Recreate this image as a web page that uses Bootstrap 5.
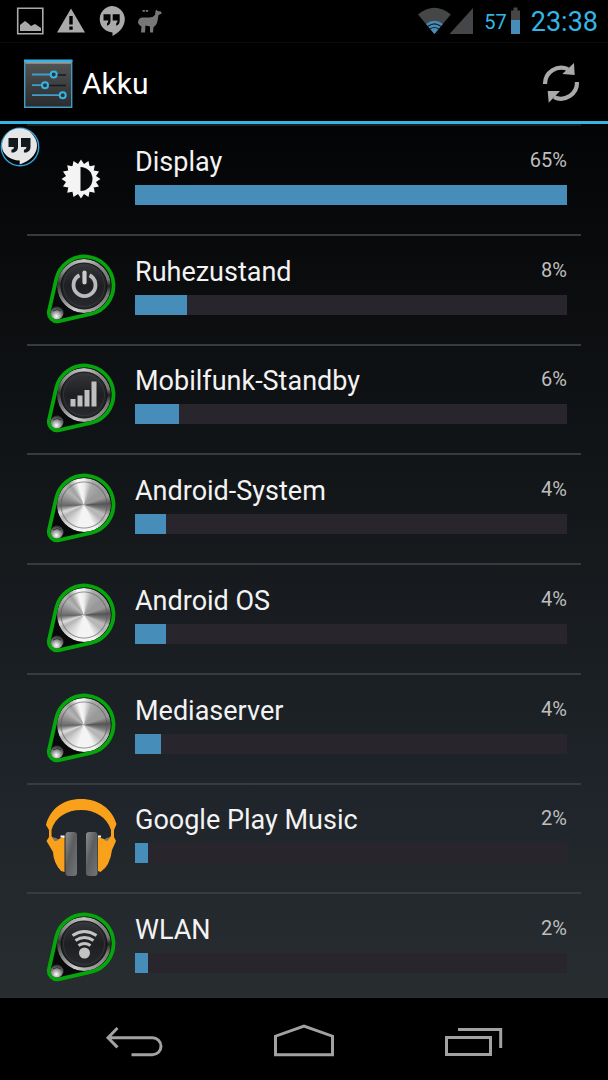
<!DOCTYPE html>
<html lang="de" data-bs-theme="dark">
<head>
<meta charset="utf-8">
<meta name="viewport" content="width=device-width, initial-scale=1">
<title>Akku</title>
<link href="https://cdn.jsdelivr.net/npm/bootstrap@5.3.0/dist/css/bootstrap.min.css" rel="stylesheet">
<style>
  body { background: #000; color: #f3f3f3; font-family: Roboto, "Liberation Sans", sans-serif; }
  svg { display: block; overflow: visible; flex: none; }
  .status { height: 42px; padding: 0 10px 0 17px; color: #33b5e5; }
  .status-left { gap: 13px; }
  .charge { font-size: 20px; line-height: 24px; margin-left: 11px; padding-top: 2px; }
  .clock { font-size: 27px; line-height: 32px; margin-left: 11px; padding-top: 2px; }
  .titlebar { height: 82px; padding: 2px 28px 0 24px; border-top: 1px solid #0c0c0c; border-bottom: 3px solid #33b5e5; }
  .titlebar h1 { font-size: 30px; line-height: 36px; font-weight: 400; margin-left: 10px; padding-top: 2px; }
  .plain { background: none; border: 0; padding: 0; }
  .panel { background: linear-gradient(#030405, #0b0d0f 20%, #15191c 48%, #20252b 78%, #282d30); }
  /* the last entry runs a little under the navigation bar */
  .usage { display: grid; grid-auto-rows: 1fr; margin: 0 27px -4px; flex: 1; list-style: none; padding: 0; }
  .usage a { height: 100%; padding: 0 14px 0 18px; gap: 18px; border-top: 2px solid #373b3e; color: inherit; text-decoration: none; }
  .usage li:first-child a { border-color: #1c1e20; }
  .app-name { font-size: 27px; line-height: 32px; }
  .share { font-size: 20px; line-height: 28px; color: #bebebe; }
  .details { padding-bottom: 9px; }
  .progress { --bs-progress-height: 20px; --bs-progress-bg: #29252c; --bs-progress-bar-bg: #468dba; --bs-progress-border-radius: 0; margin-top: 7px; }
  .knob { width: 72px; height: 72px; }
  .knob::before { content: ""; position: absolute; left: 12px; top: 5px; width: 54px; height: 54px; border-radius: 50%;
    background: conic-gradient(#c4c4c4, #8a8a8a 40deg, #777 75deg, #222 90deg, #777 110deg, #a5a5a5 170deg, #ccc 200deg, #777 245deg, #333 275deg, #8a8a8a 305deg, #c4c4c4); }
  .metal::before { background:
    radial-gradient(circle, transparent 22px, #5559 23px, transparent 24px),
    conic-gradient(#eee, #aaa 22deg, #999 50deg, #999 70deg, #555 87deg, #777 100deg, #bbb 115deg, #b5b5b5 130deg, #f4f4f4 155deg, #f4f4f4 195deg, #d5d5d5 220deg, #b4b4b4 240deg, #ddd 252deg, #666 268deg, #888 285deg, #b5b5b5 310deg, #a0a0a0 325deg, #f6f6f6 345deg, #eee); }
  .knob svg { position: relative; }
  .bubble { left: 0; top: 127px; z-index: 2; }
  .navbuttons { height: 82px; z-index: 1; background: #000; padding: 4px 104px 0; }
</style>
</head>
<body>
<svg width="0" height="0" class="position-absolute" aria-hidden="true">
  <defs>
    <radialGradient id="dotFill" cx=".45" cy=".75" r=".7"><stop offset="0" stop-color="#fff"/><stop offset=".5" stop-color="#999"/><stop offset="1" stop-color="#333"/></radialGradient>
    <linearGradient id="faceFill" x2="0" y2="1"><stop offset="0" stop-color="#35363a"/><stop offset=".5" stop-color="#1e1f22"/><stop offset="1" stop-color="#292a2e"/></linearGradient>
    <linearGradient id="padFill" x2="1" y2="1"><stop offset="0" stop-color="#8b8d8e"/><stop offset=".45" stop-color="#5b5d5e"/><stop offset="1" stop-color="#737576"/></linearGradient>
    <linearGradient id="tileFill" x2="0" y2="1"><stop offset="0" stop-color="#555"/><stop offset="1" stop-color="#292b2d"/></linearGradient>
  </defs>
  <symbol id="drop" viewBox="0 0 72 72">
    <path fill="#08090a" fill-rule="evenodd" d="M11.2 25.1A29 29 0 1 1 45.9 59.8L14.2 67.1A8.5 8.5 0 0 1 4 56.9ZM12 32a27 27 0 1 0 54 0a27 27 0 1 0-54 0Z"/>
    <path fill="none" stroke="#05a50b" stroke-width="3.8" d="M11.2 25.1A29 29 0 1 1 45.9 59.8L14.2 67.1A8.5 8.5 0 0 1 4 56.9Z"/>
    <circle cx="12" cy="59" r="6.5" fill="url(#dotFill)"/>
    <path d="M8 57q4-3 8 0" fill="none" stroke="#333"/>
  </symbol>
  <symbol id="face" viewBox="0 0 72 72">
    <circle cx="39" cy="32" r="23" fill="url(#faceFill)" stroke="#111"/>
    <circle cx="39" cy="32" r="20.5" fill="none" stroke="#3b3c40" stroke-width=".7"/>
  </symbol>
</svg>

<div class="d-flex flex-column min-vh-100 position-relative overflow-hidden">
  <header>
    <div class="status d-flex align-items-center justify-content-between">
      <div class="status-left d-flex">
        <svg width="27" height="30" viewBox="17 6 27 30"><path d="M17.7 8.2h25.1v25.6H17.7z" fill="none" stroke="#aaa" stroke-width="1.6"/><path fill="#aaa" d="M20 31v-6l5-4 4 3 2 2 4-2 6 4v3z"/></svg>
        <svg width="28" height="30" viewBox="57 6 28 30"><path fill="#aaa" fill-rule="evenodd" d="M71 8.5 85 32.500H57ZM69.300 16v8.500h3.400V16zm0 10.500v3.300h3.400v-3.300z"/></svg>
        <svg width="27" height="30" viewBox="98 6 27 30"><path fill="#aaa" d="M111.500 6a13.300 13.300 0 0 1 13.300 13.300C124.800 27 119 32.500 112.500 36v-3.500A13.300 13.300 0 0 1 111.500 6Z"/><path fill="#050505" d="M103.500 14.300h7v6.500q0 4-3.500 5v-2.500q1.300-.8 1.300-2.800h-4.800zM112.700 14.300h7v6.500q0 4-3.500 5v-2.500q1.300-.8 1.300-2.800h-4.800z"/></svg>
        <svg width="24" height="30" viewBox="140 6 24 30"><path fill="#777" d="M140 23q0-5 4-5.500h7q4 0 6-2.500l.5-4 1-1.500 1 1.500 3.500.5.8 2-3.300 1.500-1 6q-1 4.500-4 6l-.5 5.500h-3v-6l-4.500-1-.5 7h-4l.5-6q-3-2-3.500-3.500zM144.500 10h2.400v1.800h-2.400zM147.800 10h2.400v1.800h-2.400z"/></svg>
      </div>
      <div class="d-flex align-items-center">
        <svg width="33" height="30" viewBox="418 6 33 30"><path fill="#444648" d="M434.400 34 418 14.500q16.400-13.500 32.800 0Z"/><path fill="#468dba" d="M434.400 34 426 24q8.400-6.500 16.800 0Z"/><path fill="none" stroke="#191e22" stroke-width="1.200" d="M428 26.200q6.400-4.800 12.800 0M430 29q4.400-3 8.800 0"/></svg>
        <svg width="22" height="30" viewBox="451 6 22 30"><path fill="#444648" d="M449.500 34 473 8v26z"/></svg>
        <span class="charge">57</span>
        <svg class="ms-1" width="9" height="30" viewBox="511 6 9 30"><path fill="#444648" d="M511 10.500h2.500V7.500h4v3h2.500V21h-9z"/><path fill="#468dba" d="M511 20h9v14h-9z"/></svg>
        <time class="clock">23:38</time>
      </div>
    </div>
    <div class="titlebar d-flex align-items-center">
      <svg width="48" height="49" viewBox="24 58 48 49"><path fill="url(#tileFill)" stroke="#409bc5" stroke-width="1.400" d="M24.700 59.700h47v46.600h-47z"/><path fill="#33b5e5" d="M24 58.500h48.400v2.600H24z"/><path fill="#999" d="M25.500 61h45.500v1.700H25.500z"/><g fill="none" stroke="#17191a" stroke-width="1.500"><path d="M56 74h10M48 84.500h18"/></g><g fill="none" stroke="#3f9dcb" stroke-width="1.800"><path d="M32 73.500h19M32 84.200h10M32 94.200h28"/></g><g fill="#333" stroke="#33b5e5" stroke-width="2"><circle cx="53.700" cy="73.500" r="3"/><circle cx="45" cy="84.200" r="3"/><circle cx="62.700" cy="94.200" r="3"/></g></svg>
      <h1 class="mb-0">Akku</h1>
      <button class="plain ms-auto" type="button" aria-label="Aktualisieren">
        <svg width="37" height="40" viewBox="543 63 37 40"><g fill="none" stroke="#aaa" stroke-width="4.200"><path d="M545 84A16.200 16.200 0 0 1 568 69.200M577 82A16.200 16.200 0 0 1 554 97.200"/></g><path fill="#aaa" d="m574 63 .7 12-12.400-1zM547.700 91H560l-11.300 11.700z"/></svg>
      </button>
    </div>
  </header>

  <button class="plain bubble position-absolute" type="button" aria-label="Hangouts">
    <svg width="40" height="40" viewBox="1 127 40 40"><circle cx="21" cy="147" r="18.700" fill="#050505" stroke="#33a5dc" stroke-width="1.400"/><path fill="#e6e6e6" d="M20.500 128.500A17.500 17.500 0 0 1 38 146C38 155 29 162 20.700 164.500V160.500C11 160.500 3 154 3 146A17.500 17.500 0 0 1 20.500 128.500Z"/><path fill="#12191c" d="M9.500 138h9.500v9q0 4-4 5.500h-2.600v-2.700q2.600-.3 2.600-2.800H9.500zM22 138h9.500v9q0 4-4 5.500h-2.600v-2.700q2.600-.3 2.600-2.800H22z"/></svg>
  </button>

  <main class="panel d-flex flex-column flex-grow-1">
    <ul class="usage">
      <li><a href="#" class="d-flex align-items-center">
        <svg width="72" height="72" viewBox="0 0 72 72"><path fill="#f4f4f4" transform="translate(36 35)" d="M19.500 0-7.500 18-13.800-13.800 18-7.500 0 19.500-18-7.500 13.800-13.800 7.500 18-19.500 0 7.500-18 13.800 13.800-18 7.500 0-19.500 18 7.500-13.800 13.800-7.500-18Z"/><path fill="#08090a" d="M35.500 23A12 12 0 0 1 35.500 47Z"/></svg>
        <div class="details flex-grow-1"><div class="d-flex justify-content-between"><span class="app-name">Display</span><span class="share">65%</span></div><div class="progress" role="progressbar" aria-label="Display"><div class="progress-bar" style="width:100%"></div></div></div>
      </a></li>
      <li><a href="#" class="d-flex align-items-center">
        <span class="knob position-relative"><svg width="72" height="72" viewBox="0 0 72 72"><use href="#drop"/><use href="#face"/><path d="M34.500 21.300A11 11 0 1 0 44.500 21.300" fill="none" stroke="#bbb" stroke-width="3.800"/><path d="M39.500 18.500v10" stroke="#ccc" stroke-width="4.200" stroke-linecap="round"/></svg></span>
        <div class="details flex-grow-1"><div class="d-flex justify-content-between"><span class="app-name">Ruhezustand</span><span class="share">8%</span></div><div class="progress" role="progressbar" aria-label="Ruhezustand"><div class="progress-bar" style="width:12.1%"></div></div></div>
      </a></li>
      <li><a href="#" class="d-flex align-items-center">
        <span class="knob position-relative"><svg width="72" height="72" viewBox="0 0 72 72"><use href="#drop"/><use href="#face"/><path fill="#bfbfbf" d="M25.500 36h5v7.500h-5zM32.500 32.500h5v11h-5zM39.500 27h5v16.500h-5zM46.500 18.500h5v25h-5z"/></svg></span>
        <div class="details flex-grow-1"><div class="d-flex justify-content-between"><span class="app-name">Mobilfunk-Standby</span><span class="share">6%</span></div><div class="progress" role="progressbar" aria-label="Mobilfunk-Standby"><div class="progress-bar" style="width:10.2%"></div></div></div>
      </a></li>
      <li><a href="#" class="d-flex align-items-center">
        <span class="knob metal position-relative"><svg width="72" height="72" viewBox="0 0 72 72"><use href="#drop"/></svg></span>
        <div class="details flex-grow-1"><div class="d-flex justify-content-between"><span class="app-name">Android-System</span><span class="share">4%</span></div><div class="progress" role="progressbar" aria-label="Android-System"><div class="progress-bar" style="width:7.1%"></div></div></div>
      </a></li>
      <li><a href="#" class="d-flex align-items-center">
        <span class="knob metal position-relative"><svg width="72" height="72" viewBox="0 0 72 72"><use href="#drop"/></svg></span>
        <div class="details flex-grow-1"><div class="d-flex justify-content-between"><span class="app-name">Android OS</span><span class="share">4%</span></div><div class="progress" role="progressbar" aria-label="Android OS"><div class="progress-bar" style="width:7.1%"></div></div></div>
      </a></li>
      <li><a href="#" class="d-flex align-items-center">
        <span class="knob metal position-relative"><svg width="72" height="72" viewBox="0 0 72 72"><use href="#drop"/></svg></span>
        <div class="details flex-grow-1"><div class="d-flex justify-content-between"><span class="app-name">Mediaserver</span><span class="share">4%</span></div><div class="progress" role="progressbar" aria-label="Mediaserver"><div class="progress-bar" style="width:6.1%"></div></div></div>
      </a></li>
      <li><a href="#" class="d-flex align-items-center">
        <svg width="72" height="72" viewBox="0 0 72 72"><path fill="#f9a11b" d="M1 23C5 7 18-3 36-3S67 7 71.500 22L69 28V35L71 39 67 48Q65 64 55.500 70L53 69V35L62 38 66 34V28C62 15 50 8 36 8S10 15 6.500 28V34L10 39 19.500 34V70L16 69Q8.500 61 8 50L1.500 39 4 35V28Z"/><path fill="#777" d="m7 35 4 1 3 2-4 1zM65.500 35l-4 1-3 2 4 1z"/><path fill="#fff" d="M15.500 33.500h4v2h-4zM53 33.500h3v2h-3z"/><g fill="url(#padFill)"><rect x="20.500" y="30" width="11.500" height="44" rx="3"/><rect x="41" y="30" width="11.500" height="44" rx="3"/></g></svg>
        <div class="details flex-grow-1"><div class="d-flex justify-content-between"><span class="app-name">Google Play Music</span><span class="share">2%</span></div><div class="progress" role="progressbar" aria-label="Google Play Music"><div class="progress-bar" style="width:3.1%"></div></div></div>
      </a></li>
      <li><a href="#" class="d-flex align-items-center">
        <span class="knob position-relative"><svg width="72" height="72" viewBox="0 0 72 72"><use href="#drop"/><use href="#face"/><circle cx="39.500" cy="41" r="5.500" fill="#c4c4c4"/><path d="M33.500 33.500q6-4 12 0M30.500 28.500q9-6 18 0M27.500 23.500q12-8 24 0" fill="none" stroke="#c4c4c4" stroke-width="3"/></svg></span>
        <div class="details flex-grow-1"><div class="d-flex justify-content-between"><span class="app-name">WLAN</span><span class="share">2%</span></div><div class="progress" role="progressbar" aria-label="WLAN"><div class="progress-bar" style="width:3.1%"></div></div></div>
      </a></li>
    </ul>
  </main>

  <nav class="navbuttons d-flex align-items-center justify-content-between position-relative" aria-label="Navigation">
    <button class="plain" type="button" aria-label="Zurück"><svg width="60" height="36" viewBox="105 1023 60 36"><path fill="none" stroke="#a2a2a2" stroke-width="3" d="M109 1037.700h44.500a8.500 8.500 0 0 1 0 17H132.500M118.500 1028l-9.500 9.700 9.500 9.700"/></svg></button>
    <button class="plain" type="button" aria-label="Startseite"><svg width="62" height="36" viewBox="273 1023 62 36"><path fill="none" stroke="#a2a2a2" stroke-width="3" d="M275.500 1054.700v-18.500l28.500-10 28.500 10v18.500z"/></svg></button>
    <button class="plain" type="button" aria-label="Letzte Apps"><svg width="60" height="36" viewBox="445 1023 60 36"><path fill="none" stroke="#a2a2a2" stroke-width="3" d="M447.500 1037.500h44v17h-44zM459 1029.500h42.700V1048"/></svg></button>
  </nav>
</div>
<script src="https://cdn.jsdelivr.net/npm/bootstrap@5.3.0/dist/js/bootstrap.bundle.min.js"></script>
</body>
</html>
